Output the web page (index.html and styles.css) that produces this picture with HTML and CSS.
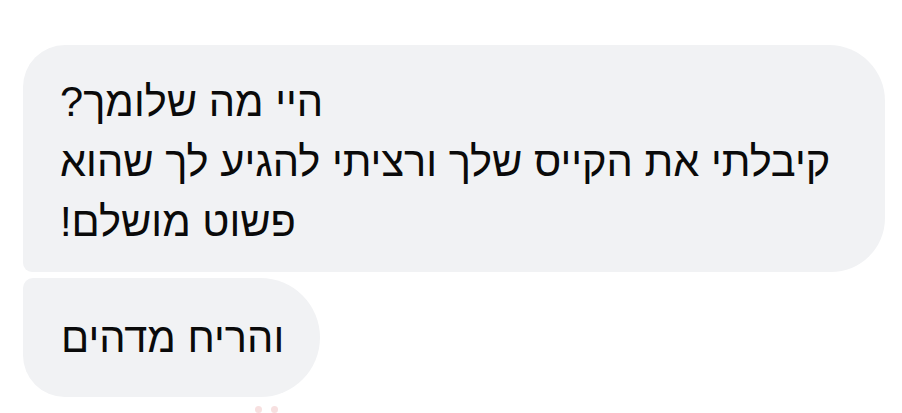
FILE: index.html
```html
<!DOCTYPE html>
<html lang="he">
<head>
    <meta charset="UTF-8">
    <title>Messages</title>
    <link rel="stylesheet" href="styles.css">
</head>
<body>
    <div class="thread">
        <div class="bubble bubble-first">
            היי מה שלומך?<br>
            קיבלתי את הקייס שלך ורציתי להגיע לך שהוא<br>
            פשוט מושלם!
        </div>
        <div class="bubble bubble-last">והריח מדהים</div>
        <div class="reaction">
            <span class="dot"></span>
            <span class="dot"></span>
        </div>
    </div>
</body>
</html>
```

FILE: styles.css
```css
* {
    margin: 0;
    padding: 0;
    box-sizing: border-box;
}

body {
    font-family: 'Liberation Sans', Arial, sans-serif;
    background: #ffffff;
    width: 902px;
    height: 413px;
    overflow: hidden;
}

.thread {
    display: flex;
    flex-direction: column;
    align-items: flex-start;
    gap: 6px;
    padding: 45px 0 0 23px;
}

.bubble {
    direction: rtl;
    text-align: left;
    background: #f1f2f4;
    color: #0a0a0a;
    font-size: 41.6px;
    line-height: 60px;
}

.bubble-first {
    width: 862px;
    padding: 27px 38px 20px 37px;
    border-radius: 42px 56px 54px 9px;
}

.bubble-last {
    padding: 30px 36px 29px 38px;
    border-radius: 10px 60px 60px 42px;
}

.reaction {
    display: flex;
    gap: 9px;
    margin: 3px 0 0 232px;
}

.dot {
    width: 7px;
    height: 7px;
    border-radius: 50%;
    background: #f7e0e0;
}
```
